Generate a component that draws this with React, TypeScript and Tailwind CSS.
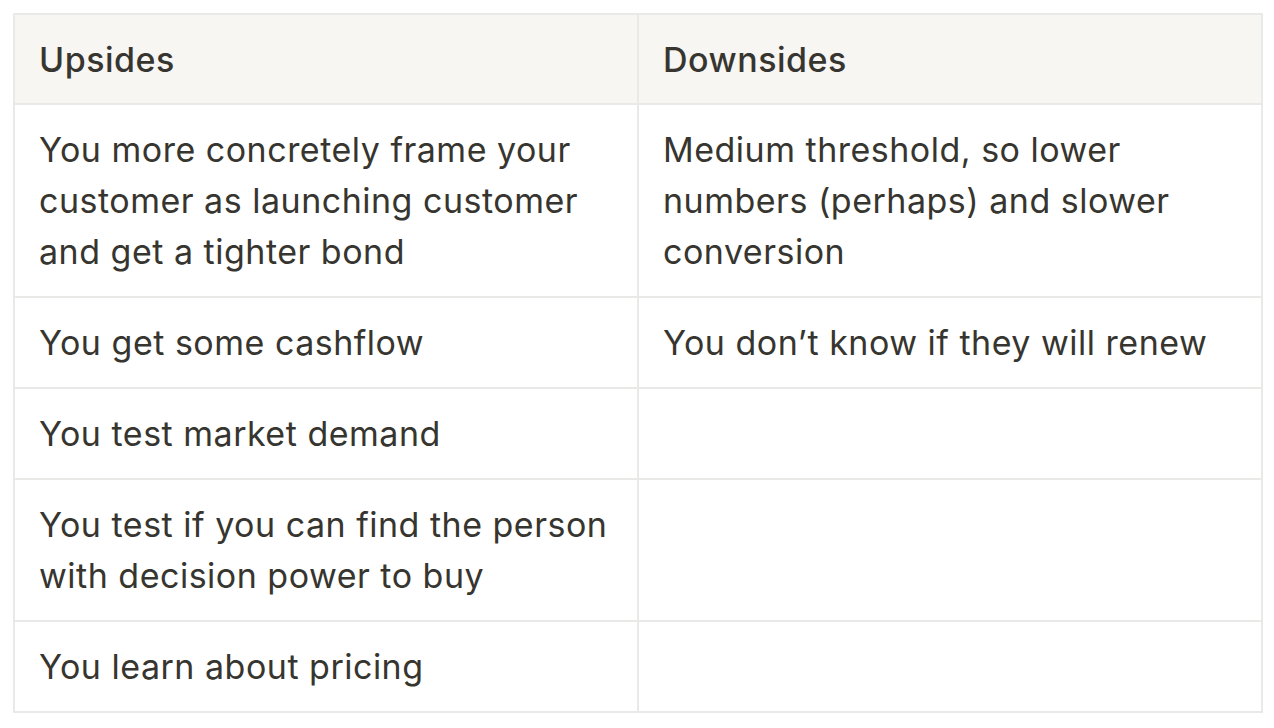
import React from 'react';

const rows: [string, string][] = [
  ['You more concretely frame your customer as launching customer and get a tighter bond', 'Medium threshold, so lower numbers (perhaps) and slower conversion'],
  ['You get some cashflow', 'You don’t know if they will renew'],
  ['You test market demand', ''],
  ['You test if you can find the person with decision power to buy', ''],
  ['You learn about pricing', ''],
];

const App = () => {
  return (
    <div className="min-h-screen bg-white pt-[13px] pl-[13px]" style={{ fontFamily: 'Inter, "Noto Sans", sans-serif' }}>
      <table className="w-[1250px] table-fixed border-collapse text-[34px] leading-[51px] tracking-[0.5px] text-[#37352f]">
        <thead>
          <tr className="bg-[#f7f6f3]">
            <th className="h-[90px] border-2 border-[#e9e9e7] pl-[24px] pr-[20px] text-left font-medium">Upsides</th>
            <th className="h-[90px] border-2 border-[#e9e9e7] pl-[24px] pr-[20px] text-left font-medium">Downsides</th>
          </tr>
        </thead>
        <tbody>
          {rows.map(([up, down], i) => (
            <tr key={i}>
              <td className="border-2 border-[#e9e9e7] pl-[24px] pr-[20px] py-[19px] align-top">{up}</td>
              <td className="border-2 border-[#e9e9e7] pl-[24px] pr-[20px] py-[19px] align-top">{down}</td>
            </tr>
          ))}
        </tbody>
      </table>
    </div>
  );
};

export default App;
